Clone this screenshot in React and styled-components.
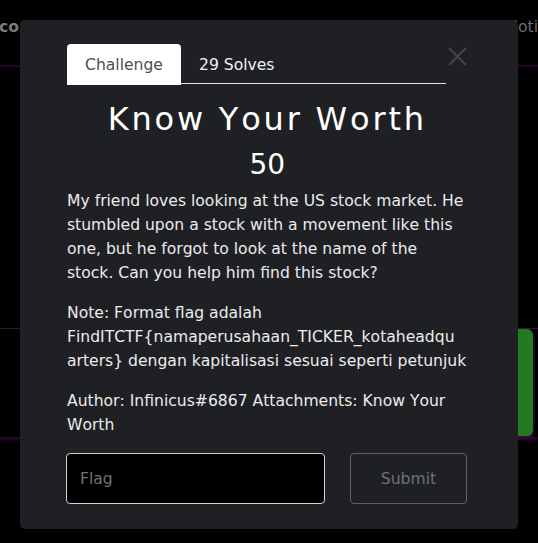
import styled, { createGlobalStyle } from "styled-components";

const GlobalStyle = createGlobalStyle`
  html, body {
    margin: 0;
    padding: 0;
    background: #000;
  }
  body {
    font-family: "DejaVu Sans", "Open Sans", sans-serif;
    font-kerning: none;
  }
  * {
    box-sizing: border-box;
  }
`;

const Page = styled.div`
  position: relative;
  width: 538px;
  height: 543px;
  overflow: hidden;
  background: #000;
`;

/* 뒤에 깔린 페이지 */
const NavBar = styled.div`
  height: 66px;
  display: flex;
  justify-content: space-between;
  align-items: flex-start;
  padding-top: 18px;
  border-bottom: 1px solid #2a0c2c;
  box-shadow: 0 1px 3px rgba(60, 10, 60, 0.6);
`;

const NavBrand = styled.span`
  color: #7a7a7a;
  font-size: 15.6px;
  font-weight: 700;
  margin-left: -1px;
`;

const NavLink = styled.span`
  color: #6e6e6e;
  font-size: 15.6px;
  margin-right: -66px;
`;

const Content = styled.div`
  padding-top: 262px;
`;

const Card = styled.div`
  height: 109px;
  display: flex;
  justify-content: flex-end;
  padding-right: 5px;
  border-top: 1px solid #3a123e;
  box-shadow: 0 3px 3px #2b0a2e;
`;

const SolveButton = styled.div`
  width: 120px;
  height: 107px;
  border-radius: 6px;
  background: #237a23;
  box-shadow: 1px 2px 3px #3a0f3e;
`;

/* 모달 */
const Overlay = styled.div`
  position: absolute;
  inset: 0;
  display: flex;
  justify-content: center;
  align-items: flex-start;
  padding-top: 20px;
`;

const Modal = styled.div`
  position: relative;
  width: 498px;
  background: #1f2024;
  border-radius: 5px;
  padding: 24px 50.5px 25px 47px;
`;

const CloseButton = styled.button`
  position: absolute;
  top: 27px;
  right: 51px;
  width: 19px;
  height: 19px;
  padding: 0;
  border: none;
  background: none;
  display: flex;
  align-items: center;
  justify-content: center;
`;

const Tabs = styled.div`
  display: flex;
  border-bottom: 1px solid #dee2e6;
  margin-right: 22px;
`;

const Tab = styled.div`
  height: 41px;
  padding: 0 18px;
  display: flex;
  align-items: center;
  font-size: 15.6px;
  border-radius: 4px 4px 0 0;
  margin-bottom: -2px;
  background: ${(p) => (p.$active ? "#fff" : "transparent")};
  color: ${(p) => (p.$active ? "#495057" : "#f1f1f1")};
`;

const Title = styled.h2`
  margin: 13px 0 0;
  text-align: center;
  color: #fff;
  font-size: 32px;
  font-weight: 400;
  line-height: 44px;
  letter-spacing: 2.8px;
`;

const Points = styled.h4`
  margin: 3px 0 0;
  text-align: center;
  color: #fff;
  font-size: 28px;
  font-weight: 400;
  line-height: 42px;
`;

const Description = styled.div`
  margin-top: 3px;
  color: #ececec;
  font-size: 15.6px;
  line-height: 24px;

  p {
    margin: 0 0 16px;
    overflow-wrap: break-word;
  }
`;

const FlagForm = styled.form`
  display: flex;
  gap: 25px;
  margin: 0 0.5px 0 -1px;
`;

const FlagInput = styled.input`
  flex: 1;
  height: 51px;
  background: #000;
  border: 1px solid #cfd2d6;
  border-radius: 4px;
  padding: 0 13px;
  font-family: inherit;
  font-size: 15.6px;
  color: #fff;
  outline: none;

  &::placeholder {
    color: #6c737a;
  }
`;

const SubmitButton = styled.button`
  width: 117px;
  height: 51px;
  background: transparent;
  border: 1px solid #5b6067;
  border-radius: 4px;
  font-family: inherit;
  font-size: 15.6px;
  color: #6c737a;
`;

const CloseIcon = () => (
  <svg width="19" height="19" viewBox="0 0 19 19">
    <path d="M1 1 L18 18 M18 1 L1 18" stroke="#45464b" strokeWidth="2" fill="none" />
  </svg>
);

const App = () => {
  return (
    <Page>
      <GlobalStyle />
      <NavBar>
        <NavBrand>contest</NavBrand>
        <NavLink>Notifications</NavLink>
      </NavBar>
      <Content>
        <Card>
          <SolveButton />
        </Card>
      </Content>

      <Overlay>
        <Modal>
          <CloseButton type="button">
            <CloseIcon />
          </CloseButton>
          <Tabs>
            <Tab $active>Challenge</Tab>
            <Tab>29 Solves</Tab>
          </Tabs>
          <Title>Know Your Worth</Title>
          <Points>50</Points>
          <Description>
            <p>
              My friend loves looking at the US stock market. He stumbled upon a
              stock with a movement like this one, but he forgot to look at the
              name of the stock. Can you help him find this stock?
            </p>
            <p>
              Note: Format flag adalah
              FindITCTF{"{"}namaperusahaan_TICKER_kotaheadqu<wbr />arters{"}"} dengan
              kapitalisasi sesuai seperti petunjuk
            </p>
            <p>Author: Infinicus#6867 Attachments: Know Your Worth</p>
          </Description>
          <FlagForm onSubmit={(e) => e.preventDefault()}>
            <FlagInput placeholder="Flag" />
            <SubmitButton type="submit" disabled>
              Submit
            </SubmitButton>
          </FlagForm>
        </Modal>
      </Overlay>
    </Page>
  );
};

export default App;
